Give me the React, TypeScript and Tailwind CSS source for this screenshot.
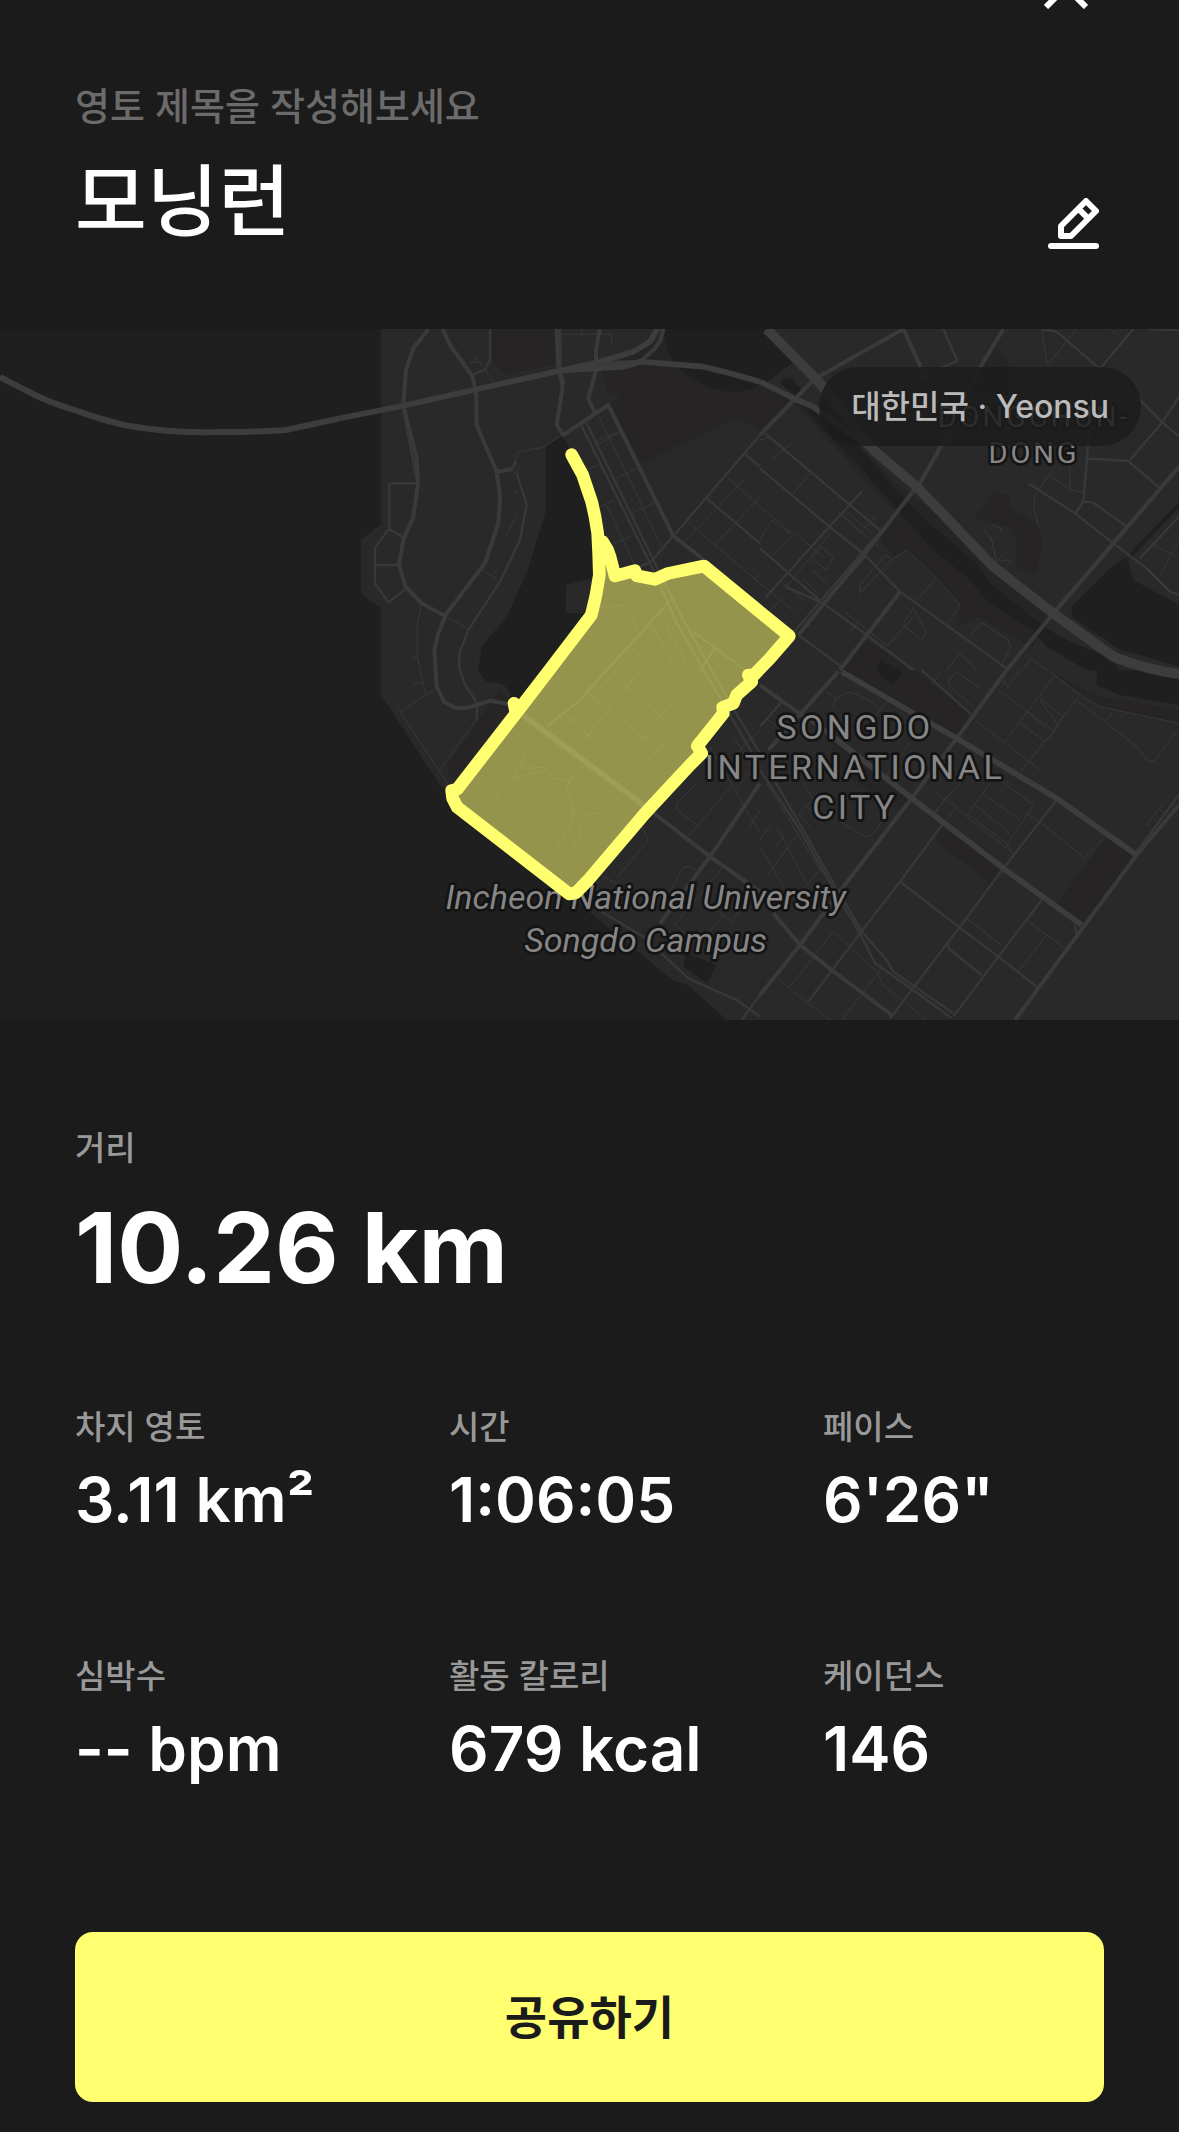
import type { ReactNode } from 'react';

const stats = [
  { label: '차지 영토', value: '3.11 km²' },
  { label: '시간', value: '1:06:05' },
  { label: '페이스', value: '6\'26"' },
  { label: '심박수', value: '-- bpm' },
  { label: '활동 칼로리', value: '679 kcal' },
  { label: '케이던스', value: '146' },
];

// Map is drawn at 3x, split into four tiles
const tiles = {
  nw: {
    x: 1020,
    y: -27,
    highway: [
      'M0 295L190 257L400 210L660 152L780 125L880 95L930 65L955 20',
      'M660 152L850 140L900 125L1090 140L1170 160L1260 185',
    ],
    main: [
      'M780 130L900 125L940 90L960 65L972 20',
      'M265 27L220 85L198 150L190 257L230 415L234 490L220 590L190 660L177 735L197 800L245 850L315 888',
      'M308 27L330 75L395 165L408 210L410 315L470 455L480 530L475 610L435 730L320 880L295 940L283 990L287 1050',
      'M780 27L768 90V150L745 235L765 280',
      'M650 27L655 140L668 200L650 315L670 345L805 255L1000 648L1090 718',
      'M470 455L515 448',
    ],
    minor: [
      'M660 27L662 150L674 190',
      'M190 270L215 400L230 480M232 490H148V625L105 683V790L145 847L200 805M148 628L190 652M105 735H177',
      'M515 448L530 425M530 460L560 555L540 660L480 785L385 930L358 1000V1050',
      'M450 27V120L435 148L395 165',
      'M725 318L940 750L1010 910L1090 1050M740 310L950 740L1030 900L1115 1050',
      'M1000 648L1260 345M1215 402L1260 440M1100 535L1260 670M1000 648L930 728L885 745',
      'M1000 830L870 975L800 1050M1060 935L1215 1050M1125 985L1080 1050',
    ],
    thin: [
      'M665 345L610 382L535 395L518 440M512 440L524 430L538 445L524 460Z',
      'M655 43H815V78M725 27V43',
      'M435 148L460 188M388 128L415 125L430 140M400 108L425 130M205 85H222',
      'M500 643L528 592M522 518L536 510M425 750L480 783M455 768L470 748M325 892L385 928',
      'M245 855L232 910V1010L240 1050M213 1012H232',
      'M772 375L840 335M765 365L830 338M825 478L895 442M875 580L945 547M775 285L965 680',
      'M745 448L775 435M780 560L820 542M800 558L885 735M820 672L880 645',
      'M1160 470L1260 560M1040 603L1260 790M1030 670L1210 480M1125 675L1260 530M1240 780L1260 760',
      'M780 862L860 855L890 935M930 905L1010 1050M955 875L1050 1050M870 980L960 1050',
    ],
  },
  ne: {
    x: 2280,
    y: -27,
    highway: [
      'M0 185L100 235L160 260L330 385L470 500',
    ],
    main: [
      'M730 27L665 135L570 330L480 490M470 500L315 700L115 945',
      'M1257 440L1060 670L880 880L740 1050M420 815L240 1050',
      'M0 345L160 180M160 180L185 165L430 27L500 180L470 170',
    ],
    minor: [
      'M15 340L365 635M0 445L190 605L315 705L420 815L740 1045M0 685L190 850L320 945L460 1050M115 945L245 1040',
      'M15 835L190 640L305 515M550 27L592 122L500 165M360 635L30 1020',
      'M845 27L890 35L1000 130L1110 210L1205 305L1257 350M1120 27L1025 140L1000 190L970 545L945 582',
      'M805 490L945 580L1060 670L1160 745L1230 815L1257 825M970 545L1000 548L1100 620M980 415L1105 423L1200 505M1110 420L1205 310L1257 230M1140 715L1257 590',
      'M1170 27L1257 30M75 800L190 850L320 705',
    ],
    thin: [
      'M845 30L862 135L950 27M1050 27L1090 60M885 440L825 525L820 565L838 625M870 465L930 510L970 518M930 440V510',
      'M695 617L720 622L725 635M673 630L692 660M693 650L710 725L745 690M710 725L738 720L755 728',
      'M0 360L30 350M40 415L95 370M100 520L150 460M0 660L35 600L90 640M230 570L355 680M0 560L95 640M35 710L105 640L190 710',
      'M260 575L335 640M250 590L300 640L345 590M180 680L220 710L200 750L155 715L185 680M155 750L200 790M130 780L175 820M70 790L130 840M210 640L80 800',
      'M400 720L375 705L300 795V820M440 690L395 720L300 820M440 690L530 775L600 855L560 915M530 775L460 850',
      'M260 880L380 975L360 985M270 935L300 900M430 910L460 865L500 935L485 960L430 915M380 980L460 890',
      'M630 950L665 908L745 960L752 985L720 1040M560 1050L600 1000L650 1050M790 1050L810 1015L860 1050',
      'M1180 675L1257 715M1200 765L1257 665M0 790L115 885M30 870L75 830',
    ],
  },
  sw: {
    x: 1020,
    y: 1023,
    highway: [
      'M548 135L910 405',
    ],
    main: [
      'M287 0L290 50L312 95L350 115L385 113L450 92L510 103',
      'M910 405L1110 560L1260 665M1260 340L1110 560L960 760',
    ],
    minor: [
      'M360 0L375 45L412 100L410 148',
      'M1090 0L1150 100L1260 290M1115 0L1165 90L1260 250',
      'M760 710L910 800L1045 925L1190 990L1260 1040M1205 1050L1260 975',
      'M800 0L720 90L620 170',
    ],
    thin: [
      'M240 0L257 75L180 125L325 345M257 75L285 60M220 42L245 38M410 148L300 298M172 108L190 128',
      'M545 255L555 262L515 330M540 285L555 295L610 292L640 325L690 333L715 295L735 290M610 305L545 318L515 330L480 355L462 395M690 333L678 355L700 415L690 470L655 525L678 552M700 415L735 435L795 425M735 435L722 450L718 500L695 540',
      'M740 65L920 210L1000 290M850 40L1000 170M680 135L760 210L820 270M680 170L830 0M720 225L900 0M840 280L1080 0M900 300L1050 130',
      'M905 470L925 510L830 625M790 620L830 640M1065 460L1010 420V400L1070 340M1045 500L1130 400L1180 340M1180 200L1260 330M1110 230L1260 490M1230 470L1260 420M1190 350L1230 310',
      'M1070 600L1050 590L1030 592L960 720M1000 770L1100 650L1150 590L1260 680M1090 690L1175 755L1230 680M1010 770L1080 820L1150 735M1260 180L1180 260',
    ],
  },
  se: {
    x: 2280,
    y: 1023,
    highway: [
      'M245 5L590 205L890 385L1130 555',
      'M180 170L455 385L730 595L965 765',
    ],
    main: [
      'M740 0L590 205L455 385L250 650L120 825L0 975',
      'M1257 405L1130 555L960 785L765 1050',
      'M0 45L110 125L180 170M235 5L25 240',
      'M40 730L120 825L215 900L395 1035',
    ],
    minor: [
      'M0 300L120 480L210 640L300 790L345 880L460 960L575 1045M25 300L130 480L220 640L310 790L380 870L400 905L580 1030',
      'M485 0L632 132M890 390L730 595L600 770L390 1045M550 460L420 635L300 790L145 995M420 635L595 770L715 860L830 950M845 690L715 860L580 1040M565 820V835L665 915M945 765L950 800',
      'M1257 375L1130 545M65 95L0 170',
    ],
    thin: [
      'M200 65L230 85M218 110L230 85L262 67L290 72L330 92L360 120M385 90L340 145M25 150L70 185M130 340L160 390L115 430L150 470M130 400L175 440',
      'M520 40L545 0M565 35L590 5L660 55M565 35L570 50L640 110M740 55L780 0M730 30L745 55M885 15L735 215M715 60L885 185L850 215M840 85L910 140L880 185L780 305M840 90L890 160M800 125L860 175M780 160L850 210M955 80L880 180M645 150L840 300',
      'M865 0L960 75L1020 110L1257 160M950 90L1130 230L1165 275L1185 270L1257 175M1035 155L1060 125',
      'M525 365L760 550L740 525L820 405L720 330M665 370L780 450M640 400L750 490M620 430L740 520M525 430L560 380L590 410L550 460M690 340L620 435M525 425L600 340',
      'M845 460L975 565L1035 500M800 430L845 460M1160 465L1210 400M1200 420L1215 430M450 220L380 315M450 240L510 280',
      'M620 745L730 830M800 750L915 835M860 795L775 905M220 785L90 950M220 785L350 905L370 945L500 1050M365 895L245 1050M50 925L210 1050',
      'M240 455L315 500L335 495L370 450M30 465L0 510M75 490L40 540M0 530L70 650M50 470L140 640M20 340L180 600L135 650M120 480L20 620',
    ],
  },
};

const route =
  'M1715 377L1748 438L1758 468L1775 518L1785 563L1793 613L1796 673L1798 738L1788 798L1774 858L1648 1023L1548 1153L1542 1123L1548 1153L1372 1380L1355 1385L1358 1408L1372 1435L1708 1695L1728 1691L1765 1653L1935 1453L2070 1308L2105 1273L2092 1251L2170 1153L2168 1135L2200 1123L2210 1098L2255 1058L2245 1038L2262 1038L2310 988L2368 921L2112 711L2005 733L1965 751L1910 740L1905 725L1845 741L1830 683L1823 663L1808 638L1800 650';

const territory =
  'M1798 738L1788 798L1774 858L1648 1023L1372 1380L1358 1408L1372 1435L1708 1695L1728 1691L1765 1653L1935 1453L2070 1308L2105 1273L2092 1251L2170 1153L2210 1098L2255 1058L2310 988L2368 921L2112 711L2005 733L1965 751L1910 740L1845 741L1823 663L1800 650Z';

function MapLabel({ x, y, children }: { x: number; y: number; children: ReactNode }) {
  return (
    <text x={x} y={y} textAnchor="middle">
      {children}
    </text>
  );
}

function TerritoryMap() {
  return (
    <svg
      viewBox="0 0 3537 2073"
      className="block w-full bg-[#1f1f1f]"
      fill="none"
      role="img"
      aria-label="영토 지도"
    >
      {/* Land */}
      <path
        fill="#292929"
        d="M1143 0V585L1083 633V793L1143 838V1098L1320 1368L1372 1420L1720 1710L2025 1958L2060 1965L2180 2073H3537V0Z"
      />

      {/* Parks */}
      <g fill="#272425">
        <g transform="translate(1020 -27)">
          <path d="M455 27V120L500 165L645 132V27Z" />
          <path d="M965 60L860 110L785 150L800 215L845 225L810 255L905 430L1170 302Q1220 285 1260 345L1350 240L1260 190Z" />
          <path d="M515 1140L480 1110L320 1340L345 1395L560 1170Z" />
        </g>
        <g transform="translate(2280 -27)">
          <path d="M90 240L180 260L420 500L560 600L700 760L860 880L820 980L720 930L660 890L590 920L600 850L440 690L400 710L360 660L410 580Z" />
          <path d="M700 80Q740 90 755 170L740 230L640 220L665 135Z" />
          <path d="M700 515L745 525L750 565L830 610Q860 680 825 765L770 745Q775 660 755 625L640 590L680 550Z" />
          <path d="M320 960L460 1050L630 1180L590 1250L250 1050Z" />
        </g>
        <g transform="translate(2280 1023)">
          <path d="M545 470L720 595L690 640L525 510Z" />
          <path d="M1040 505L1125 560L965 760L890 700Z" />
          <path d="M190 180L450 385L410 420L250 310Z" />
          <path d="M865 0L1020 80L1257 120V160L1020 110Z" />
        </g>
      </g>

      {/* Water */}
      <g fill="#1f1f1f">
        <g transform="translate(1020 -27)">
          <path d="M617 380L665 347L700 400L760 600L778 770L678 795V878L755 880L630 1050L545 1165L515 1170Q515 1090 470 1088L440 1085L415 1050L425 980L500 890L560 760L617 575Z" />
          <path d="M975 27C965 80 1000 150 1080 190S1220 220 1290 180L1360 125L1275 27Z" />
        </g>
        <g transform="translate(2280 -27)">
          <path d="M120 250L200 300L300 380L400 500L520 620L640 720L700 800L840 910L900 950L1060 1020L1080 1060L980 1050L860 980L820 930L690 850L620 770L520 690L420 580L300 440L200 340Z" />
          <path d="M1100 710L1050 745L935 860V890L1080 990L1160 1010L1257 1040V855L1120 780Z" />
          <path d="M1257 545L1110 700L1115 710L1257 565Z" />
          <path d="M70 175L95 175L130 215L110 230L60 190Z" />
          <path d="M360 1020L430 1060L400 1095L350 1055Z" />
        </g>
        <path transform="translate(2280 1023)" d="M1010 0V45L1080 75L1257 105V30L1130 0Z" />
        <path transform="translate(1020 1023)" d="M1040 850L1130 885L1100 940L1030 890Z" />
      </g>
      <path d="M1698 768L1798 743L1790 790L1774 853H1698Z" fill="#292929" />

      {/* Roads */}
      <g strokeLinejoin="round">
        {Object.entries(tiles).map(([id, tile]) => (
          <g key={id} transform={`translate(${tile.x} ${tile.y})`}>
            <path d={tile.thin.join('')} stroke="#383838" strokeWidth={3} />
            <path d={tile.minor.join('')} stroke="#383838" strokeWidth={7} />
            <path d={tile.main.join('')} stroke="#3a3a3a" strokeWidth={12} />
            <path d={tile.highway.join('')} stroke="#3d3d3d" strokeWidth={17} />
          </g>
        ))}
        <path
          d="M0 144C70 180 130 215 204 237C280 262 340 285 408 294C490 307 570 312 654 309C730 309 790 308 858 303L1020 268"
          stroke="#3d3d3d"
          strokeWidth={18}
        />
        <path
          d="M2300 0L2460 163L2620 363L2750 473L2980 713L3160 853L3340 983Q3430 1020 3537 1035"
          stroke="#3d3d3d"
          strokeWidth={30}
        />
      </g>

      {/* Place names */}
      <g
        className="font-['Roboto',sans-serif] [paint-order:stroke]"
        fill="#868686"
        stroke="#141414"
        strokeWidth={16}
        strokeLinejoin="round"
      >
        <g className="text-[102px] tracking-widest">
          <MapLabel x={2565} y={1231}>SONGDO</MapLabel>
          <MapLabel x={2565} y={1350}>INTERNATIONAL</MapLabel>
          <MapLabel x={2565} y={1470}>CITY</MapLabel>
        </g>
        <g className="text-[87px] tracking-widest">
          <MapLabel x={3102} y={293}>DONGCHUN-</MapLabel>
          <MapLabel x={3102} y={403}>DONG</MapLabel>
        </g>
        <g className="text-[102px] italic">
          <MapLabel x={1937} y={1739}>Incheon National University</MapLabel>
          <MapLabel x={1937} y={1870}>Songdo Campus</MapLabel>
        </g>
      </g>

      {/* Claimed territory and route */}
      <path d={territory} fill="#ffff70" fillOpacity={0.5} />
      <path d={route} stroke="#ffff70" strokeWidth={38} strokeLinecap="round" strokeLinejoin="round" />
    </svg>
  );
}

export default function App() {
  return (
    <div className="min-h-screen overflow-hidden bg-[#1b1b1b] font-['Inter','Noto_Sans_CJK_KR',sans-serif] text-white">
      <header className="px-[75px] pb-[75px]">
        <div className="-mt-[51px] flex justify-end">
          <button type="button" aria-label="닫기" className="flex size-[76px] items-center justify-center">
            <svg viewBox="0 0 44 44" className="size-[44px]" fill="none" stroke="currentColor" strokeWidth={6}>
              <path d="M2 2L42 42M42 2L2 42" />
            </svg>
          </button>
        </div>
        <p className="mt-[57px] text-[38px] leading-[48px] font-medium text-[#6b6b6b]">영토 제목을 작성해보세요</p>
        <div className="flex items-end justify-between pt-[20px]">
          <h1 className="text-[78px] leading-[104px] font-medium">모닝런</h1>
          <button type="button" aria-label="제목 수정" className="p-[5px]">
            <svg
              viewBox="0 0 153 153"
              className="size-[51px]"
              fill="none"
              stroke="currentColor"
              strokeWidth={18}
              strokeLinecap="round"
              strokeLinejoin="round"
            >
              <path d="M39 84L114 9L144 39L69 114H39Z" />
              <path d="M91 32L121 62" strokeLinecap="butt" />
              <path d="M9 144H144" />
            </svg>
          </button>
        </div>
      </header>

      <div className="relative">
        <TerritoryMap />
        <div className="absolute top-[38px] right-[38px] rounded-full bg-[#1c1c1c]/85 px-[32px] py-[16px] text-[32px] leading-[47px] font-medium text-[#bbbbbb]">
          대한민국 · Yeonsu
        </div>
      </div>

      <main className="px-[75px] pt-[104px] pb-[30px]">
        <dl>
          <dt className="text-[33px] leading-[48px] font-medium text-[#999999]">거리</dt>
          <dd className="mt-[16px] text-[98px] leading-[120px] font-bold">10.26 km</dd>
        </dl>
        <dl className="mt-[95px] grid grid-cols-3 gap-x-[93px] gap-y-[114px]">
          {stats.map((stat) => (
            <div key={stat.label} className="whitespace-nowrap">
              <dt className="text-[33px] leading-[48px] font-medium text-[#999999]">{stat.label}</dt>
              <dd className="mt-[11px] text-[62px] leading-[76px] font-semibold">{stat.value}</dd>
            </div>
          ))}
        </dl>
        <button
          type="button"
          className="mt-[145px] h-[170px] w-full rounded-[18px] bg-[#ffff70] text-[46px] font-semibold text-[#1b1b1b]"
        >
          공유하기
        </button>
      </main>
    </div>
  );
}
